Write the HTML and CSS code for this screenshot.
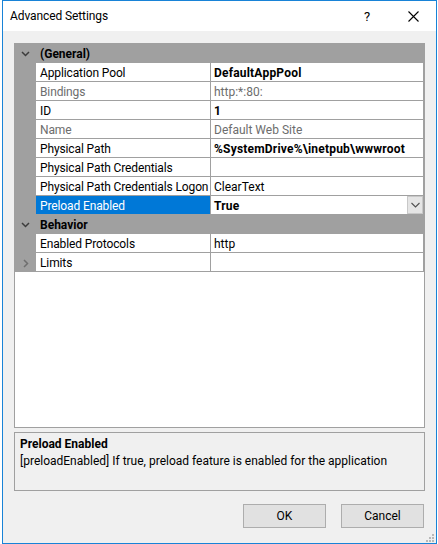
FILE: index.html
```html
<!DOCTYPE html>
<html>
<head>
<meta charset="utf-8">
<link rel="stylesheet" href="styles.css">
</head>
<body>
<div class="dialog">
  <div class="titlebar">
    <span class="title">Advanced Settings</span>
    <span class="help">?</span>
    <span class="close"><svg width="11" height="11" viewBox="0 0 11 11"><path d="M0.5 0.5 L10.5 10.5 M10.5 0.5 L0.5 10.5" stroke="#000" stroke-width="1.1" fill="none"/></svg></span>
  </div>
  <div class="content">
    <div class="grid">
      <div class="row cat">
        <div class="gut"><svg width="9" height="6" viewBox="0 0 9 6"><path d="M1 1 L4.5 4.5 L8 1" stroke="#3c3c3c" stroke-width="1.5" fill="none"/></svg></div>
        <div class="catname">(General)</div>
      </div>
      <div class="row"><div class="gut"></div><div class="name">Application Pool</div><div class="val b">DefaultAppPool</div></div>
      <div class="row"><div class="gut"></div><div class="name ro">Bindings</div><div class="val ro">http:*:80:</div></div>
      <div class="row"><div class="gut"></div><div class="name">ID</div><div class="val b">1</div></div>
      <div class="row"><div class="gut"></div><div class="name ro">Name</div><div class="val ro">Default Web Site</div></div>
      <div class="row"><div class="gut"></div><div class="name">Physical Path</div><div class="val b">%SystemDrive%\inetpub\wwwroot</div></div>
      <div class="row"><div class="gut"></div><div class="name">Physical Path Credentials</div><div class="val"></div></div>
      <div class="row"><div class="gut"></div><div class="name">Physical Path Credentials Logon</div><div class="val">ClearText</div></div>
      <div class="row"><div class="gut"></div><div class="name sel">Preload Enabled</div><div class="val b drop"><span class="dval">True</span><span class="dbtn"><svg width="9" height="6" viewBox="0 0 9 6"><path d="M0.5 1 L4.5 5 L8.5 1" stroke="#505050" stroke-width="1.1" fill="none"/></svg></span></div></div>
      <div class="row cat">
        <div class="gut"><svg width="9" height="6" viewBox="0 0 9 6"><path d="M1 1 L4.5 4.5 L8 1" stroke="#3c3c3c" stroke-width="1.5" fill="none"/></svg></div>
        <div class="catname">Behavior</div>
      </div>
      <div class="row"><div class="gut"></div><div class="name">Enabled Protocols</div><div class="val">http</div></div>
      <div class="row"><div class="gut"><svg width="6" height="9" viewBox="0 0 6 9"><path d="M1 1 L4.5 4.5 L1 8" stroke="#6e6e6e" stroke-width="1.5" fill="none"/></svg></div><div class="name">Limits</div><div class="val"></div></div>
    </div>
    <div class="desc">
      <div class="dtitle">Preload Enabled</div>
      <div class="dtext">[preloadEnabled] If true, preload feature is enabled for the application</div>
    </div>
    <div class="buttons">
      <button class="btn">OK</button>
      <button class="btn">Cancel</button>
    </div>
    <div class="grip"><svg width="10" height="10" viewBox="0 0 10 10" fill="#b8b8b8"><rect x="7" y="1" width="2" height="2"/><rect x="4" y="4" width="2" height="2"/><rect x="7" y="4" width="2" height="2"/><rect x="1" y="7" width="2" height="2"/><rect x="4" y="7" width="2" height="2"/><rect x="7" y="7" width="2" height="2"/></svg></div>
  </div>
</div>
</body>
</html>
```
FILE: styles.css
```css
* { box-sizing: border-box; }
html, body { margin: 0; padding: 0; }
body {
  background: #ffffff;
  font-family: Roboto, "Noto Sans", sans-serif;
  font-size: 12px;
  color: #000;
}
.dialog {
  margin-left: 2px;
  width: 435px;
  height: 544px;
  border: 1px solid #1883d7;
  background: #f0f0f0;
  display: flex;
  flex-direction: column;
}
.titlebar {
  height: 30px;
  background: #fff;
  display: flex;
  align-items: center;
  flex: none;
}
.title {
  padding-left: 7px;
  flex: 1;
  font-size: 12px;
  letter-spacing: -0.1px;
}
.help {
  width: 20px;
  text-align: center;
  margin-right: 31px;
  font-size: 13px;
}
.close {
  width: 11px;
  height: 11px;
  display: flex;
  margin-right: 17px;
}
.content {
  flex: 1;
  padding: 12px 11px 0 11px;
  display: flex;
  flex-direction: column;
  position: relative;
}
.grid {
  height: 385px;
  background: #fff;
  border: 1px solid #a0a0a0;
  flex: none;
}
.row {
  display: flex;
  height: 19px;
}
.gut {
  width: 21px;
  flex: none;
  background: #a0a0a0;
  display: flex;
  align-items: center;
  justify-content: center;
  padding-top: 1px;
}
.cat { background: #a0a0a0; }
.catname {
  font-weight: bold;
  padding-left: 4px;
  padding-top: 2px;
  line-height: 17px;
}
.name {
  width: 175px;
  flex: none;
  border-right: 1px solid #a0a0a0;
  border-bottom: 1px solid #a0a0a0;
  padding-left: 4px;
  padding-top: 2px;
  line-height: 16px;
  white-space: nowrap;
  overflow: hidden;
  letter-spacing: -0.12px;
}
.val {
  flex: 1;
  border-bottom: 1px solid #a0a0a0;
  border-right: 1px solid #a0a0a0;
  padding-left: 3px;
  padding-top: 2px;
  line-height: 16px;
  white-space: nowrap;
  overflow: hidden;
}
.ro { color: #6d6d6d; }
.b { font-weight: bold; letter-spacing: 0.2px; }
.sel {
  background: #0078d7;
  color: #fff;
}
.drop {
  display: flex;
  padding-top: 0;
}
.dval { flex: 1; padding-top: 2px; }
.dbtn {
  width: 16px;
  height: 18px;
  background: #e5e5e5;
  border: 1px solid #c8c8c8;
  display: flex;
  align-items: center;
  justify-content: center;
}
.desc {
  margin-top: 4px;
  height: 59px;
  border: 1px solid #a0a0a0;
  padding: 3px 5px;
  flex: none;
}
.dtitle {
  font-weight: bold;
  line-height: 17px;
}
.dtext {
  line-height: 17px;
}
.buttons {
  display: flex;
  justify-content: flex-end;
  gap: 15px;
  margin-top: 13px;
  padding-right: 1px;
}
.btn {
  width: 83px;
  height: 24px;
  background: #e1e1e1;
  border: 1px solid #adadad;
  font-family: inherit;
  font-size: 12px;
  color: #000;
  padding: 0;
}
.grip {
  position: absolute;
  right: 1px;
  bottom: 1px;
  width: 10px;
  height: 10px;
}
```
